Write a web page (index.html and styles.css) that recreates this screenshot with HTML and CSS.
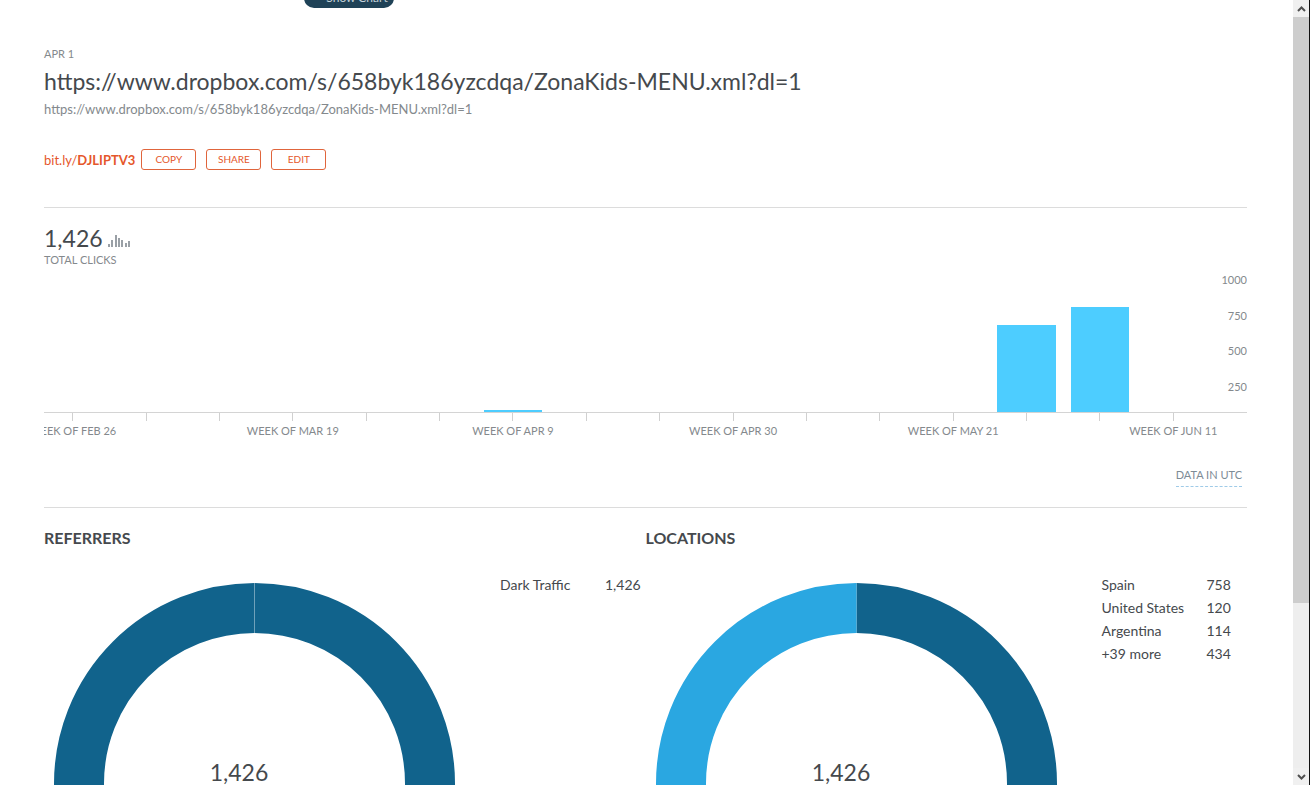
FILE: index.html
```html
<!DOCTYPE html>
<html lang="en">
<head>
<meta charset="utf-8">
<title>Link details</title>
<link rel="stylesheet" href="styles.css">
</head>
<body>
<main class="page">
  <div class="top-strip"><button class="show-chart" type="button">Show Chart</button></div>

  <header class="link-info">
    <p class="caption">APR 1</p>
    <h1 class="link-title">https://www.dropbox.com/s/658byk186yzcdqa/ZonaKids-MENU.xml?dl=1</h1>
    <a class="long-url" href="#">https://www.dropbox.com/s/658byk186yzcdqa/ZonaKids-MENU.xml?dl=1</a>
    <div class="actions">
      <a class="short-url" href="#">bit.ly/<b>DJLIPTV3</b></a>
      <div class="buttons">
        <button class="outline-btn" type="button">COPY</button>
        <button class="outline-btn" type="button">SHARE</button>
        <button class="outline-btn" type="button">EDIT</button>
      </div>
    </div>
  </header>

  <section class="clicks">
    <div class="total">
      <span class="total-number">1,426</span>
      <svg class="bars-icon" width="22" height="12" viewBox="0 0 22 12" fill="#9aa0a6" aria-hidden="true">
        <rect x="0" y="9" width="2" height="3"/><rect x="3" y="5" width="2" height="7"/><rect x="7" y="0" width="2" height="12"/><rect x="10" y="3" width="2" height="9"/><rect x="13" y="5" width="2" height="7"/><rect x="17" y="8" width="2" height="4"/><rect x="20" y="6" width="2" height="6"/>
      </svg>
    </div>
    <p class="caption">TOTAL CLICKS</p>

    <div class="chart">
      <div class="weeks">
        <div class="week"><div class="plot"></div><span class="tick"></span><span class="week-label">WEEK OF FEB 26</span></div>
        <div class="week"><div class="plot"></div><span class="tick"></span></div>
        <div class="week"><div class="plot"></div><span class="tick"></span></div>
        <div class="week"><div class="plot"></div><span class="tick"></span><span class="week-label">WEEK OF MAR 19</span></div>
        <div class="week"><div class="plot"></div><span class="tick"></span></div>
        <div class="week"><div class="plot"></div><span class="tick"></span></div>
        <div class="week"><div class="plot"><div class="bar" style="height:1.5%"></div></div><span class="tick"></span><span class="week-label">WEEK OF APR 9</span></div>
        <div class="week"><div class="plot"></div><span class="tick"></span></div>
        <div class="week"><div class="plot"></div><span class="tick"></span></div>
        <div class="week"><div class="plot"></div><span class="tick"></span><span class="week-label">WEEK OF APR 30</span></div>
        <div class="week"><div class="plot"></div><span class="tick"></span></div>
        <div class="week"><div class="plot"></div><span class="tick"></span></div>
        <div class="week"><div class="plot"></div><span class="tick"></span><span class="week-label">WEEK OF MAY 21</span></div>
        <div class="week"><div class="plot"><div class="bar" style="height:61.3%"></div></div><span class="tick"></span></div>
        <div class="week"><div class="plot"><div class="bar" style="height:74%"></div></div><span class="tick"></span></div>
        <div class="week"><div class="plot"></div><span class="tick"></span><span class="week-label">WEEK OF JUN 11</span></div>
      </div>
      <div class="scale"><span>1000</span><span>750</span><span>500</span><span>250</span></div>
    </div>
    <div class="utc-row"><a class="utc" href="#">DATA IN UTC</a></div>
  </section>

  <div class="breakdowns">
    <section class="breakdown">
      <h2>REFERRERS</h2>
      <div class="breakdown-body">
        <svg class="donut" width="401" height="401" viewBox="0 0 401 401" role="img" aria-label="Referrers">
          <circle cx="200.5" cy="200.5" r="175.5" fill="none" stroke="#11638c" stroke-width="50"/>
          <path d="M200.5 0V50" stroke="#6fa1ba"/>
          <text class="donut-total" x="185" y="198">1,426</text>
        </svg>
        <table class="legend"><tbody><tr><th scope="row">Dark Traffic</th><td>1,426</td></tr></tbody></table>
      </div>
    </section>
    <section class="breakdown">
      <h2>LOCATIONS</h2>
      <div class="breakdown-body">
        <svg class="donut" width="401" height="401" viewBox="0 0 401 401" role="img" aria-label="Locations">
          <path d="M200.5 25A175.5 175.5 0 0 1 200.5 376" fill="none" stroke="#11638c" stroke-width="50"/>
          <path d="M200.5 376A175.5 175.5 0 0 1 200.5 25" fill="none" stroke="#2aa7e1" stroke-width="50"/>
          <text class="donut-total" x="185" y="198">1,426</text>
        </svg>
        <table class="legend"><tbody>
          <tr><th scope="row">Spain</th><td>758</td></tr>
          <tr><th scope="row">United States</th><td>120</td></tr>
          <tr><th scope="row">Argentina</th><td>114</td></tr>
          <tr><th scope="row">+39 more</th><td>434</td></tr>
        </tbody></table>
      </div>
    </section>
  </div>
</main>

<aside class="scrollbar" aria-label="Scroll">
  <button type="button" aria-label="Scroll up"><svg width="9" height="6" viewBox="0 0 9 6" fill="none" stroke="#505050" stroke-width="2"><path d="M1 5 4.5 1.500 8 5"/></svg></button>
  <div class="track"><div class="thumb"></div></div>
  <button type="button" aria-label="Scroll down"><svg width="9" height="6" viewBox="0 0 9 6" fill="none" stroke="#505050" stroke-width="2"><path d="M1 1 4.500 4.500 8 1"/></svg></button>
</aside>
</body>
</html>
```
FILE: styles.css
```css
* { box-sizing: border-box; }

body {
  margin: 0;
  height: 100vh;
  display: flex;
  overflow: hidden;
  background: #fff;
  color: #45494d;
  font-family: Lato, "Open Sans", sans-serif;
}

h1, h2, p { margin: 0; font-weight: 400; }
button { font-family: inherit; padding: 0; }
a { text-decoration: none; }

.page { flex: 1; min-width: 0; padding: 0 46px 0 44px; overflow: hidden; }

.top-strip {
  height: 8px;
  padding-left: 260px;
  display: flex;
  align-items: flex-end;
}
.show-chart {
  flex: none;
  width: 90px;
  height: 26px;
  border: 0;
  border-radius: 10px;
  background: #1f4257;
  color: #c5d2da;
  font-size: 12px;
  line-height: 16px;
  padding: 8px 0 2px 16px;
}

.caption { font-size: 11px; line-height: 16px; color: #84898d; }

.link-info { padding: 38px 0 37px; border-bottom: 1px solid #dcdcdc; }
.link-title { font-size: 23px; line-height: 39px; }
.long-url { display: block; font-size: 13px; line-height: 16px; color: #84898d; }
.actions { display: flex; align-items: center; gap: 6px; margin-top: 32px; }
.buttons { display: flex; gap: 10px; }
.short-url { color: #e5572b; font-size: 13px; line-height: 20px; }
.outline-btn {
  width: 55px;
  height: 21px;
  border: 1px solid #e0653c;
  border-radius: 3px;
  background: #fff;
  color: #e5572b;
  font-size: 10px;
  line-height: 17px;
}

.clicks { border-bottom: 1px solid #dcdcdc; padding-top: 16px; }
.total { display: flex; align-items: center; gap: 5px; }
.total-number { font-size: 23px; line-height: 28px; }
.bars-icon { margin-top: 6px; }

.chart { position: relative; margin-top: 2px; overflow: hidden; }
.weeks {
  display: grid;
  grid-template-columns: repeat(16, minmax(0, 1fr));
  margin: 0 37px 0 -8px;
}
.week { display: flex; flex-direction: column; align-items: center; height: 172px; }
.plot {
  width: 100%;
  height: 142px;
  flex: none;
  display: flex;
  align-items: flex-end;
  justify-content: center;
}
.bar { width: 80%; background: #4dcdff; }
.tick { width: 1px; height: 9px; flex: none; background: #d0d0d0; }
.week-label { margin-top: 1px; font-size: 11px; line-height: 18px; white-space: nowrap; color: #84898d; }
.scale {
  position: absolute;
  inset: 0 0 auto 0;
  height: 143px;
  border-bottom: 1px solid #d4d4d4;
  display: grid;
  grid-template-rows: repeat(4, 1fr);
  justify-items: end;
  font-size: 11px;
  line-height: 20px;
  color: #84898d;
}

.utc-row { display: flex; justify-content: flex-end; padding: 25px 5px 20px; }
.utc {
  font-size: 11px;
  line-height: 16px;
  padding-bottom: 3px;
  color: #7d8b96;
  border-bottom: 1px dashed #9fcbe8;
}

.breakdowns { display: grid; grid-template-columns: 1fr 1fr; }
.breakdown { min-width: 0; padding-top: 19px; }
.breakdown h2 { font-size: 16px; line-height: 22px; font-weight: 700; }
.breakdown-body { display: flex; align-items: flex-start; padding: 34px 0 0 10px; }
.donut { flex: none; }
.donut-total { font-size: 23px; fill: #45494d; text-anchor: middle; }
.legend { margin: -10px 0 0 45px; border-collapse: collapse; font-size: 14px; line-height: 23px; white-space: nowrap; }
.legend th { width: 105px; padding: 0; text-align: left; font-weight: 400; }
.legend td { padding: 0; }

.scrollbar {
  flex: none;
  width: 17px;
  display: flex;
  flex-direction: column;
  background: #eee;
  border-right: 1px solid #111;
}
.scrollbar button {
  flex: none;
  height: 17px;
  border: 0;
  background: #f0f0f0;
  display: flex;
  align-items: center;
  justify-content: center;
}
.track { flex: 1; }
.thumb { height: 78%; background: #cdcdcd; }
```
